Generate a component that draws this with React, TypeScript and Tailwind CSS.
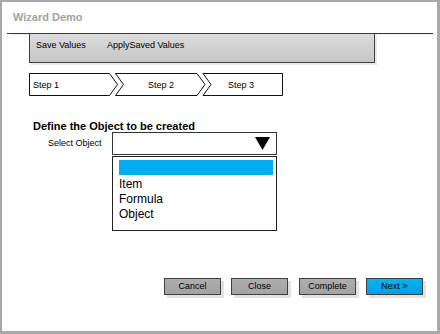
import React from "react";

const font = { fontFamily: '"Liberation Sans", Arial, sans-serif' };

function Steps() {
  return (
    <svg width="256" height="24" viewBox="0 0 256 24" className="block">
      <polygon points="0.5,0.5 80.5,0.5 88.5,11.5 80.5,22.5 0.5,22.5" fill="#fff" stroke="#111" strokeWidth="1" />
      <polygon points="86.5,0.5 168,0.5 176,11.5 168,22.5 86.5,22.5 94.5,11.5" fill="#fff" stroke="#111" strokeWidth="1" />
      <polygon points="174,0.5 253.5,0.5 253.5,22.5 174,22.5 182,11.5" fill="#fff" stroke="#111" strokeWidth="1" />
      <text x="4" y="14.5" fontSize="9" fill="#000" style={font}>Step 1</text>
      <text x="119" y="14.5" fontSize="9" fill="#000" style={font}>Step 2</text>
      <text x="199" y="14.5" fontSize="9" fill="#000" style={font}>Step 3</text>
    </svg>
  );
}

function Btn({ label, primary, className }: { label: string; primary?: boolean; className?: string }) {
  return (
    <div
      className={
        "w-[57px] h-[17px] border border-[#404040] flex items-center justify-center text-[9px] leading-[11px] text-black shadow-[3px_3px_0_#e2e2e2] " +
        (primary ? "bg-gradient-to-b from-[#00b4f0] to-[#00a2e2] " : "bg-gradient-to-b from-[#adadad] to-[#a3a3a3] ") +
        (className ?? "")
      }
    >
      {label}
    </div>
  );
}

export default function App() {
  return (
    <div
      style={font}
      className="w-[440px] h-[334px] box-border bg-white border-[#a9a9a9] border-l-2 border-t-2 border-r-[3px] border-b-[3px] flex flex-col"
    >
      <div className="h-[31px] pl-[11px] pt-[9px] text-[11px] leading-[13px] font-bold text-[#a3a3a3]">Wizard Demo</div>
      <div className="ml-[5px] w-[426px] h-px bg-[#3c3c3c] shadow-[3px_1px_0_#ececec]" />
      <div className="ml-[27px] w-[346px] h-[29px] border-x border-b border-[#404040] bg-gradient-to-b from-[#dcdcdc] to-[#c6c6c6] shadow-[2px_2px_0_#e8e8e8] flex items-start pt-[6px] pl-[6px] text-[9px] leading-[11px] text-black">
        <span>Save Values</span>
        <span className="ml-[21px]">ApplySaved Values</span>
      </div>
      <div className="ml-[27px] mt-[10px]">
        <Steps />
      </div>
      <div className="ml-[31px] mt-[23px] text-[11px] leading-[12px] font-bold text-black">Define the Object to be created</div>
      <div className="flex items-center">
        <div className="ml-[46px] w-[64px] text-[9px] leading-[11px] text-black">Select Object</div>
        <div className="relative">
          <div className="w-[165px] h-[23px] border border-[#333] flex items-center justify-end pr-[6px]">
            <svg width="15" height="13" viewBox="0 0 15 13">
              <polygon points="0,0 15,0 7.5,13" fill="#000" />
            </svg>
          </div>
          <div className="absolute left-0 top-full mt-px w-[165px] h-[75px] border border-[#222] bg-white pl-[6px] pr-[3px] pt-[3px]">
            <div className="h-[15px] bg-[#00aeef] mb-[2px]" />
            <div className="text-[12px] leading-[15px] text-black">Item</div>
            <div className="text-[12px] leading-[15px] text-black">Formula</div>
            <div className="text-[12px] leading-[15px] text-black">Object</div>
          </div>
        </div>
      </div>
      <div className="mt-auto mb-[36px] flex justify-end pr-[14px]">
        <Btn label="Cancel" />
        <Btn label="Close" className="ml-[10px]" />
        <Btn label="Complete" className="ml-[11px]" />
        <Btn label="Next >" primary className="ml-[10px]" />
      </div>
    </div>
  );
}
